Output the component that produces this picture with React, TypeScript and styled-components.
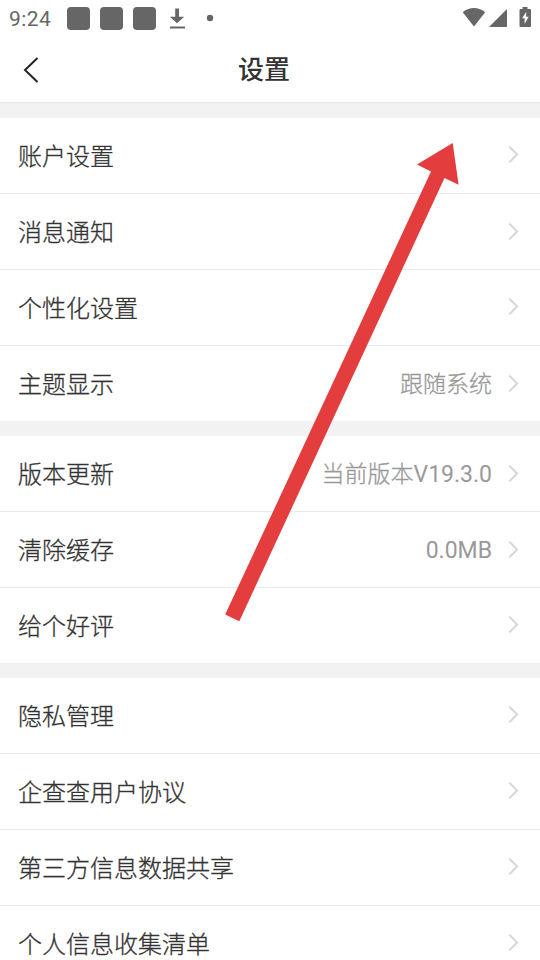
import React from 'react';
import styled, { createGlobalStyle } from 'styled-components';

const GlobalStyle = createGlobalStyle`
  * { box-sizing: border-box; }
  html, body { margin: 0; padding: 0; }
  body {
    background: #f2f2f2;
    overflow: hidden;
    font-family: Roboto, "Noto Sans CJK SC", sans-serif;
    color: #333;
  }
`;

const Screen = styled.main`
  position: relative;
  display: flex;
  flex-direction: column;
  width: 540px;
  height: 960px;
  overflow: hidden;
  background: #f2f2f2;
`;

const StatusBar = styled.div`
  display: flex;
  align-items: center;
  flex: none;
  height: 37px;
  padding: 0 9px;
  background: #fff;
  color: #666;
`;

const Clock = styled.span`
  width: 58px;
  padding-top: 2px;
  font-size: 21px;
  line-height: 35px;
  letter-spacing: 0.4px;
`;

const AppSquare = styled.span`
  width: 23px;
  height: 23px;
  margin-right: 10px;
  border-radius: 4px;
  background: #666;
`;

const StatusIcon = styled.svg`
  display: block;
  flex: none;
`;

const Spacer = styled.span`
  flex: 1;
`;

const Header = styled.header`
  display: grid;
  grid-template-columns: 60px 1fr 72px;
  align-items: center;
  flex: none;
  height: 66px;
  border-bottom: 1px solid #e8e8e8;
  background: #fff;
`;

const BackButton = styled.button`
  height: 65px;
  padding: 0 0 0 23px;
  border: 0;
  background: none;
`;

const Title = styled.h1`
  margin: 0;
  padding-top: 1px;
  font-size: 26px;
  font-weight: 500;
  line-height: 64px;
  text-align: center;
`;

const Group = styled.section`
  flex: none;
  margin-top: 15px;
  background: #fff;
`;

const Row = styled.div`
  display: flex;
  align-items: center;
  height: 76px;
  padding: 0 21px 0 18px;
  border-bottom: 1px solid #ebebeb;
  &:last-child {
    height: 75px;
    border-bottom: 0;
  }
`;

const Label = styled.span`
  flex: 1;
  padding-top: 4px;
  font-size: 24px;
  font-weight: 300;
  line-height: 71px;
  -webkit-text-stroke: 0.3px #333;
`;

const Value = styled.span`
  margin-right: 16px;
  padding-top: 2px;
  font-size: 23px;
  font-weight: 300;
  line-height: 73px;
  color: #999;
  -webkit-text-stroke: 0.3px #999;
`;

const Figures = styled.span`
  font-weight: 400;
  -webkit-text-stroke: 0;
`;

const Chevron = styled.svg<{ $lift: number }>`
  display: block;
  margin-bottom: ${(p) => p.$lift}px;
`;

const Pointer = styled.svg`
  position: absolute;
  top: 0;
  left: 0;
  pointer-events: none;
`;

type Item = { label: string; value?: string; figures?: string; lift?: number };

const groups: Item[][] = [
  [
    { label: '账户设置', lift: 2 },
    { label: '消息通知' },
    { label: '个性化设置', lift: 2 },
    { label: '主题显示', value: '跟随系统' },
  ],
  [
    { label: '版本更新', value: '当前版本', figures: 'V19.3.0' },
    { label: '清除缓存', figures: '0.0MB' },
    { label: '给个好评', lift: 2 },
  ],
  [
    { label: '隐私管理', lift: 2 },
    { label: '企查查用户协议', lift: 2 },
    { label: '第三方信息数据共享', lift: 2 },
    { label: '个人信息收集清单', lift: 2 },
  ],
];

export default function App() {
  return (
    <>
      <GlobalStyle />
      <Screen>
        <StatusBar>
          <Clock>9:24</Clock>
          <AppSquare />
          <AppSquare />
          <AppSquare />
          <StatusIcon width="60" height="37" viewBox="0 0 60 37" fill="#666">
            <path d="M9.2 8.5h3.8v8.2h5.2L11 23.3l-7.2-6.6h5.4z" />
            <path d="M4 26.5h15v2H4z" />
            <circle cx="44" cy="18" r="3.2" />
          </StatusIcon>
          <Spacer />
          <StatusIcon width="69" height="37" viewBox="0 0 69 37" fill="#666">
            <path d="M.7 12.3Q11.9 3.9 23.2 12.3L12 26.5z" />
            <path d="M45 9v18H27z" />
            <path
              fillRule="evenodd"
              d="M60.5 7h5v2h2.5q1 0 1 1v16q0 1-1 1h-9.5q-1 0-1-1V10q0-1 1-1h2zM64.3 11.8L60.2 18.3h2.4V24l4.1-7.2h-2.6z"
            />
          </StatusIcon>
        </StatusBar>
        <Header>
          <BackButton aria-label="返回">
            <StatusIcon width="16" height="26" viewBox="0 0 16 26">
              <path d="M14.5 1L2 13l12.5 12" fill="none" stroke="#222" strokeWidth="2" />
            </StatusIcon>
          </BackButton>
          <Title>设置</Title>
        </Header>
        {groups.map((items, i) => (
          <Group key={i}>
            {items.map(({ label, value, figures, lift = 0 }) => (
              <Row key={label}>
                <Label>{label}</Label>
                {(value || figures) && (
                  <Value>
                    {value}
                    {figures && <Figures>{figures}</Figures>}
                  </Value>
                )}
                <Chevron $lift={lift} width="11" height="19" viewBox="0 0 11 19">
                  <path d="M1.3 1.6l7.8 7.9-7.8 7.9" fill="none" stroke="#d6d6d6" strokeWidth="2" />
                </Chevron>
              </Row>
            ))}
          </Group>
        ))}
        <Pointer width="540" height="960" viewBox="0 0 540 960">
          <path d="M452.7 143L458.6 184.7 444.5 178 239.3 621.3 225.2 614.6 431 171.5 417 164.6z" fill="#e43d3d" />
        </Pointer>
      </Screen>
    </>
  );
}
